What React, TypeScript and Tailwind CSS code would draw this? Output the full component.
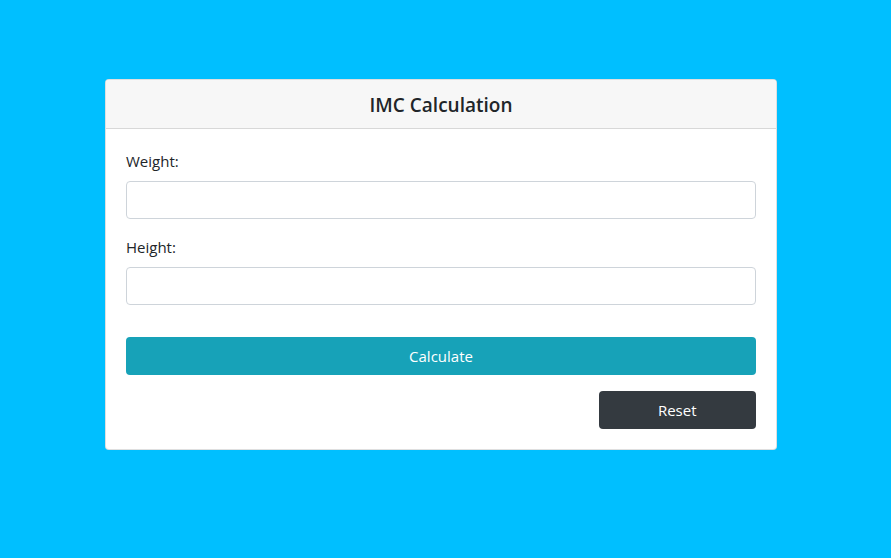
import React from "react";

export default function App() {
  return (
    <div
      className="w-[891px] h-[558px] bg-[#00bfff] pt-[79px] pl-[105px]"
      style={{ fontFamily: '"Open Sans", "Noto Sans", sans-serif' }}
    >
      <div className="w-[672px] bg-white border border-[rgba(0,0,0,0.125)] rounded-[4px] text-[#212529] overflow-hidden">
        <div className="h-[49px] pt-[2px] bg-[#f7f7f7] border-b border-[rgba(0,0,0,0.125)] flex items-center justify-center">
          <h3 className="text-[19px] font-semibold leading-none">IMC Calculation</h3>
        </div>
        <div className="p-5 flex flex-col">
          <label className="text-[15px] leading-6 mb-2">Weight:</label>
          <input className="h-[38px] border border-[#ced4da] rounded-[4px] px-3 outline-none" />
          <label className="text-[15px] leading-6 mb-2 mt-[16px]">Height:</label>
          <input className="h-[38px] border border-[#ced4da] rounded-[4px] px-3 outline-none" />
          <button className="mt-[32px] h-[38px] bg-[#17a2b8] text-white text-[15px] rounded-[4px]">
            Calculate
          </button>
          <div className="flex justify-end mt-4">
            <button className="w-1/4 h-[38px] bg-[#343a40] text-white text-[15px] rounded-[4px]">
              Reset
            </button>
          </div>
        </div>
      </div>
    </div>
  );
}
